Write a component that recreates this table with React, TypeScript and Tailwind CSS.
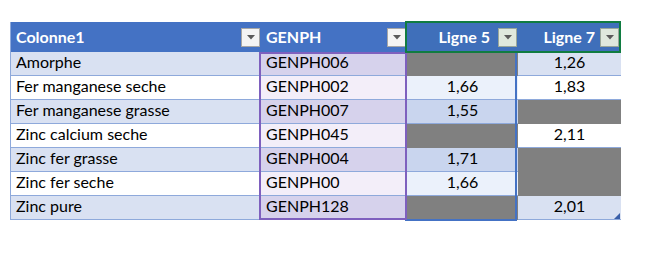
import React from 'react'

type Row = { name: string; code: string; l5: string | null; l7: string | null }

const rows: Row[] = [
  { name: 'Amorphe', code: 'GENPH006', l5: null, l7: '1,26' },
  { name: 'Fer manganese seche', code: 'GENPH002', l5: '1,66', l7: '1,83' },
  { name: 'Fer manganese grasse', code: 'GENPH007', l5: '1,55', l7: null },
  { name: 'Zinc calcium seche', code: 'GENPH045', l5: null, l7: '2,11' },
  { name: 'Zinc fer grasse', code: 'GENPH004', l5: '1,71', l7: null },
  { name: 'Zinc fer seche', code: 'GENPH00', l5: '1,66', l7: null },
  { name: 'Zinc pure', code: 'GENPH128', l5: null, l7: '2,01' },
]

function FilterButton({ selected }: { selected?: boolean }) {
  return (
    <div
      className={
        'flex h-[19px] w-[19px] shrink-0 items-center justify-center border ' +
        (selected ? 'border-[#9aa79a] bg-[#dfe8dd]' : 'border-[#a6a6a6] bg-[#f4f4f4]')
      }
    >
      <svg width="8" height="5" viewBox="0 0 8 5">
        <path d="M0 0 H8 L4 4.5 Z" fill="#5a5a5a" />
      </svg>
    </div>
  )
}

export default function App() {
  return (
    <div className="h-[257px] w-[651px] bg-white pl-[10px] pt-[22px] font-['Lato','Liberation_Sans',sans-serif] text-[16px] text-black">
      <div className="relative w-[611px]">
        <div className="grid grid-cols-[250px_146px_111px_103px] border-l border-r border-[#8ea9db]">
          {/* header */}
          <div className="flex h-[30px] items-center justify-between bg-[#4472c4] pl-[5px] pr-[1px] font-bold text-white">
            <span>Colonne1</span>
            <FilterButton />
          </div>
          <div className="flex h-[30px] items-center justify-between bg-[#4472c4] pl-[5px] pr-[1px] font-bold text-white">
            <span>GENPH</span>
            <FilterButton />
          </div>
          <div className="flex h-[30px] items-center justify-end gap-[8px] bg-[#3f6fba] pr-[1px] font-bold text-white">
            <span>Ligne 5</span>
            <FilterButton selected />
          </div>
          <div className="flex h-[30px] items-center justify-end gap-[5px] bg-[#3f6fba] pr-[2px] font-bold text-white">
            <span>Ligne 7</span>
            <FilterButton selected />
          </div>

          {rows.map((r, i) => {
            const odd = i % 2 === 0
            return (
              <React.Fragment key={r.code + i}>
                <div
                  className={
                    'flex h-[24px] items-end border-b border-[#8ea9db] pb-[1px] pl-[5px] ' +
                    (odd ? 'bg-[#d9e1f2]' : 'bg-white')
                  }
                >
                  {r.name}
                </div>
                <div
                  className={
                    'flex h-[24px] items-end border-b border-[#8ea9db] pb-[1px] pl-[5px] ' +
                    (odd ? 'bg-[#d6d2ec]' : 'bg-[#f3eef9]')
                  }
                >
                  {r.code}
                </div>
                <div
                  className={
                    'flex h-[24px] items-end justify-center pb-[1px] ' +
                    (r.l5 === null
                      ? 'bg-[#808080]'
                      : 'border-b border-[#8ea9db] ' + (odd ? 'bg-[#c9d5ee]' : 'bg-[#ebf1fb]'))
                  }
                >
                  {r.l5}
                </div>
                <div
                  className={
                    'flex h-[24px] items-end justify-center pb-[1px] ' +
                    (r.l7 === null
                      ? 'bg-[#808080]'
                      : 'border-b border-[#8ea9db] ' + (odd ? 'bg-[#d9e1f2]' : 'bg-white'))
                  }
                >
                  {r.l7}
                </div>
              </React.Fragment>
            )
          })}
        </div>

        {/* selection outlines */}
        <div className="pointer-events-none absolute left-[395px] top-[30px] h-[169px] w-[112px] border-2 border-t-0 border-[#4472c4]" />
        <div className="pointer-events-none absolute left-[249px] top-[30px] h-[168px] w-[148px] border-2 border-[#7e60be]" />
        <div className="pointer-events-none absolute left-[395px] top-[-1px] h-[32px] w-[216px] border-2 border-[#107c41]" />
        {/* resize handle */}
        <svg className="pointer-events-none absolute left-[604px] top-[191px]" width="6" height="6" viewBox="0 0 6 6">
          <path d="M6 0 V6 H0 Z" fill="#3a5fa8" />
        </svg>
      </div>
    </div>
  )
}
